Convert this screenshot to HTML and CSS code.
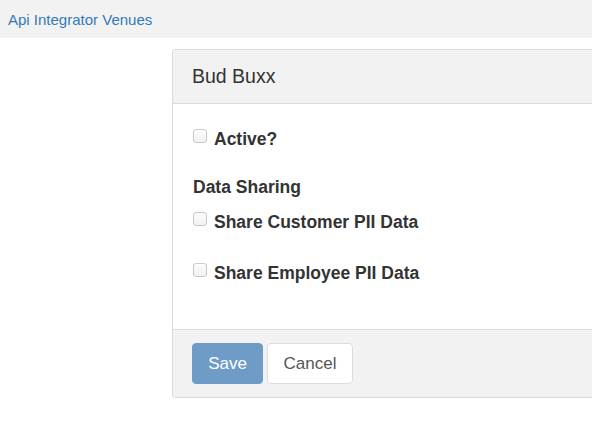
FILE: index.html
```html
<!DOCTYPE html>
<html>
<head>
<meta charset="utf-8">
<link rel="stylesheet" href="styles.css">
</head>
<body>
<div class="topbar"><a class="brand" href="#">Api Integrator Venues</a></div>
<div class="panel">
  <div class="panel-heading">Bud Buxx</div>
  <div class="panel-body">
    <label class="check active-row"><input type="checkbox"><span>Active?</span></label>
    <div class="section-title">Data Sharing</div>
    <label class="check customer-row"><input type="checkbox"><span>Share Customer PII Data</span></label>
    <label class="check employee-row"><input type="checkbox"><span>Share Employee PII Data</span></label>
  </div>
  <div class="panel-footer">
    <button class="btn btn-primary" type="button">Save</button>
    <button class="btn btn-default" type="button">Cancel</button>
  </div>
</div>
</body>
</html>
```
FILE: styles.css
```css
html, body {
  margin: 0;
  padding: 0;
  background: #fff;
  font-family: "Liberation Sans", Arial, sans-serif;
  color: #333;
}
.topbar {
  height: 38px;
  background: #f2f2f2;
  display: flex;
  align-items: center;
  padding: 0 8px;
}
.brand {
  color: #337ab7;
  text-decoration: none;
  font-size: 15px;
  line-height: 20px;
  padding-top: 1px;
}
.panel {
  margin: 11px 0 0 172px;
  border: 1px solid #dadada;
  border-right: none;
  border-radius: 4px 0 0 4px;
  box-shadow: 0 1px 1px rgba(0,0,0,0.05);
}
.panel-heading {
  height: 53px;
  background: #f2f2f2;
  border-bottom: 1px solid #dadada;
  border-radius: 3px 0 0 0;
  padding: 0 19px;
  display: flex;
  align-items: center;
  font-size: 19.5px;
  color: #333;
}
.panel-body {
  padding: 24px 20px 0 20px;
  height: 201px;
}
.check {
  display: flex;
  align-items: center;
  height: 20px;
  font-weight: bold;
  font-size: 17.5px;
  color: #333;
}
.check input {
  appearance: none;
  -webkit-appearance: none;
  width: 14px;
  height: 14px;
  margin: 0 7px 0 0;
  border: 1px solid #c9c9c9;
  border-radius: 3px;
  background: linear-gradient(#fdfdfd, #f1f1f1);
  box-sizing: border-box;
  position: relative;
  top: -2px;
}
.check span {
  position: relative;
  top: 1px;
}
.section-title {
  margin-top: 29px;
  height: 20px;
  line-height: 20px;
  font-weight: bold;
  font-size: 17.5px;
}
.customer-row { margin-top: 14px; }
.employee-row { margin-top: 31px; }
.panel-footer {
  border-top: 1px solid #dadada;
  background: #f2f2f2;
  border-radius: 0 0 0 3px;
  height: 67px;
  padding: 0 19px;
  display: flex;
  align-items: center;
  gap: 4px;
}
.btn {
  height: 41px;
  padding: 0 15px;
  font-family: "Liberation Sans", Arial, sans-serif;
  font-size: 17px;
  border-radius: 4px;
  border: 1px solid transparent;
  cursor: pointer;
}
.btn-primary {
  background: #6e9cc7;
  border-color: #6e9cc7;
  color: #fff;
  width: 71px;
}
.btn-default {
  background: #fff;
  border-color: #dcdcdc;
  color: #555;
  width: 86px;
}
```
